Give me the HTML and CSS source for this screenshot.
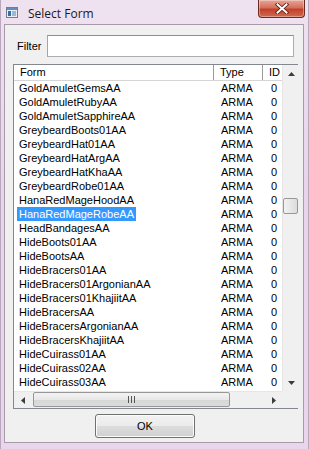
FILE: index.html
```html
<!DOCTYPE html>
<html>
<head>
  <meta charset="UTF-8">
  <title>Select Form</title>
  <link rel="stylesheet" href="styles.css">
</head>
<body>
  <div class="window">
    <div class="titlebar">
      <svg class="app-icon" width="12" height="11" viewBox="0 0 12 11">
        <rect x="0.5" y="0.5" width="11" height="10" fill="#e8eef4" stroke="#6d7f92"/>
        <rect x="1" y="1" width="10" height="2" fill="#5d8fc4"/>
        <rect x="2" y="4" width="3" height="5" fill="#3c6e9e"/>
        <rect x="6" y="4" width="4" height="5" fill="#9fb7cf"/>
      </svg>
      <span class="title">Select Form</span>
      <div class="close-btn">
        <svg width="14" height="11" viewBox="0 0 14 11">
          <path d="M2.5 1.5 L11.5 9.5 M11.5 1.5 L2.5 9.5" stroke="#5a1a12" stroke-width="3.6" stroke-linecap="square"/>
          <path d="M2.5 1.5 L11.5 9.5 M11.5 1.5 L2.5 9.5" stroke="#fff" stroke-width="2" stroke-linecap="square"/>
        </svg>
      </div>
    </div>

    <div class="client">
      <div class="filter-row">
        <label for="filter">Filter</label>
        <input type="text" id="filter" class="filter-input">
      </div>

      <div class="listbox">
        <div class="viewport">
          <div class="header">
            <div class="col col-form">Form</div>
            <div class="col col-type">Type</div>
            <div class="col col-id">ID</div>
          </div>
          <div class="rows" id="rows"></div>
        </div>
        <div class="vscroll">
          <div class="arrow"><svg width="7" height="4" viewBox="0 0 7 4"><path d="M0 4 L3.5 0 L7 4 Z" fill="#3c3c3c"/></svg></div>
          <div class="vspace"></div>
          <div class="vthumb"></div>
          <div class="vrest"></div>
          <div class="arrow"><svg width="7" height="4" viewBox="0 0 7 4"><path d="M0 0 L7 0 L3.5 4 Z" fill="#3c3c3c"/></svg></div>
        </div>
        <div class="hscroll">
          <div class="arrow"><svg width="4" height="7" viewBox="0 0 4 7"><path d="M4 0 L4 7 L0 3.5 Z" fill="#3c3c3c"/></svg></div>
          <div class="htrack">
            <div class="hthumb">
              <svg width="7" height="7" viewBox="0 0 7 7"><path d="M0.5 0 V7 M3.5 0 V7 M6.5 0 V7" stroke="#555" stroke-width="1"/></svg>
            </div>
          </div>
          <div class="arrow"><svg width="4" height="7" viewBox="0 0 4 7"><path d="M0 0 L4 3.5 L0 7 Z" fill="#3c3c3c"/></svg></div>
        </div>
        <div class="corner"></div>
      </div>

      <div class="button-row">
        <button class="btn-ok">OK</button>
      </div>
    </div>
  </div>

  <script>
    var forms = [
      'GoldAmuletGemsAA', 'GoldAmuletRubyAA', 'GoldAmuletSapphireAA',
      'GreybeardBoots01AA', 'GreybeardHat01AA', 'GreybeardHatArgAA',
      'GreybeardHatKhaAA', 'GreybeardRobe01AA', 'HanaRedMageHoodAA',
      'HanaRedMageRobeAA', 'HeadBandagesAA', 'HideBoots01AA', 'HideBootsAA',
      'HideBracers01AA', 'HideBracers01ArgonianAA', 'HideBracers01KhajiitAA',
      'HideBracersAA', 'HideBracersArgonianAA', 'HideBracersKhajiitAA',
      'HideCuirass01AA', 'HideCuirass02AA', 'HideCuirass03AA'
    ];
    var rows = document.getElementById('rows');
    forms.forEach(function(name) {
      var row = document.createElement('div');
      row.className = 'row';
      var sel = name === 'HanaRedMageRobeAA' ? ' selected' : '';
      row.innerHTML =
        '<div class="col col-form"><span class="name' + sel + '">' + name + '</span></div>' +
        '<div class="col col-type">ARMA</div>' +
        '<div class="col col-id">0</div>';
      rows.appendChild(row);
    });
  </script>
</body>
</html>
```

FILE: styles.css
```css
* {
  margin: 0;
  padding: 0;
  box-sizing: border-box;
}

body {
  width: 309px;
  height: 449px;
  overflow: hidden;
  background: #e9d7ec;
  font-family: 'Liberation Sans', Arial, sans-serif;
  font-size: 11px;
  color: #000;
}

.window {
  height: 449px;
  padding: 0 4px 6px 3px;
  display: flex;
  flex-direction: column;
  background: linear-gradient(180deg, #efe2f0 0%, #e8d5eb 40%, #ead6ec 100%);
  border-left: 1px solid #b9a7bd;
  border-right: 1px solid #b9a7bd;
}

/* title bar */
.titlebar {
  height: 24px;
  display: flex;
  align-items: flex-start;
}

.app-icon {
  margin: 7px 0 0 2px;
}

.title {
  margin: 5px 0 0 10px;
  font-family: 'Open Sans', 'Noto Sans', sans-serif;
  font-size: 12px;
  color: #1a1a1a;
}

.close-btn {
  margin-left: auto;
  margin-right: -1px;
  width: 47px;
  height: 18px;
  border: 1px solid #6d2a22;
  border-top: none;
  border-radius: 0 0 4px 4px;
  background: linear-gradient(180deg, #e8a597 0%, #d4705d 45%, #c2402a 55%, #cf6a4f 100%);
  display: flex;
  align-items: center;
  justify-content: center;
  box-shadow: inset 0 0 0 1px rgba(255,255,255,0.35);
}

/* client area */
.client {
  flex: 1;
  background: #f0f0f0;
  border: 1px solid #a89aa9;
  display: flex;
  flex-direction: column;
  padding: 9px 7px 0 8px;
}

.filter-row {
  display: flex;
  align-items: center;
  height: 23px;
}

.filter-row label {
  width: 34px;
  padding-left: 4px;
  font-size: 11px;
}

.filter-input {
  width: 247px;
  height: 22px;
  border: 1px solid #abadb3;
  border-top-color: #8e8f8f;
  border-left-color: #a5a5a5;
  background: #fff;
  outline: none;
}

/* list view */
.listbox {
  margin-top: 7px;
  width: 285px;
  height: 345px;
  border: 1px solid #828790;
  background: #fff;
  display: grid;
  grid-template-columns: 268px 17px;
  grid-template-rows: 326px 17px;
}

.viewport {
  overflow: hidden;
}

.header {
  display: flex;
  height: 16px;
  background: #fff;
  border-bottom: 1px solid #d5d5d5;
}

.header .col {
  line-height: 15px;
  border-right: 1px solid #9a9a9a;
  padding-left: 6px;
  box-shadow: inset -1px 0 0 #fff;
}

.col {
  flex: none;
  white-space: nowrap;
  overflow: hidden;
}

.col-form {
  width: 200px;
}

.col-type {
  width: 49px;
  padding-left: 7px;
}

.col-id {
  width: 50px;
  padding-left: 8px;
}

.rows .col-form {
  padding-left: 3px;
}

.row {
  display: flex;
  height: 14px;
  line-height: 14px;
}

.name {
  display: inline-block;
  padding: 0 2px;
}

.name.selected {
  background: #3399ff;
  color: #fff;
}

/* scrollbars */
.vscroll {
  background: #f0f0f0;
  display: flex;
  flex-direction: column;
  border-left: 1px solid #e6e6e6;
}

.vscroll .arrow {
  flex: none;
  height: 17px;
  display: flex;
  align-items: center;
  justify-content: center;
}

.vspace {
  flex: none;
  height: 116px;
}

.vrest {
  flex: 1;
}

.vthumb {
  flex: none;
  width: 15px;
  height: 16px;
  border: 1px solid #979797;
  border-radius: 2px;
  background: linear-gradient(90deg, #f2f2f2, #dcdcdc);
}

.hscroll {
  background: #f0f0f0;
  display: flex;
  border-top: 1px solid #e6e6e6;
}

.hscroll .arrow {
  width: 17px;
  display: flex;
  align-items: center;
  justify-content: center;
}

.htrack {
  flex: 1;
  padding: 0 13px 0 2px;
}

.hthumb {
  width: 197px;
  height: 15px;
  border: 1px solid #979797;
  border-radius: 2px;
  background: linear-gradient(180deg, #f3f3f3 0%, #e8e8e8 50%, #d6d6d6 51%, #dcdcdc 100%);
  display: flex;
  align-items: center;
  justify-content: center;
}

.corner {
  background: #f0f0f0;
}

/* button */
.button-row {
  padding: 5px 0 0 82px;
}

.btn-ok {
  width: 100px;
  height: 24px;
  font-family: 'Liberation Sans', Arial, sans-serif;
  font-size: 11px;
  border: 1px solid #707070;
  border-radius: 3px;
  background: linear-gradient(180deg, #f2f2f2 0%, #ebebeb 50%, #dddddd 51%, #cfcfcf 100%);
  box-shadow: inset 0 0 0 1px #fcfcfc;
  color: #000;
}
```
